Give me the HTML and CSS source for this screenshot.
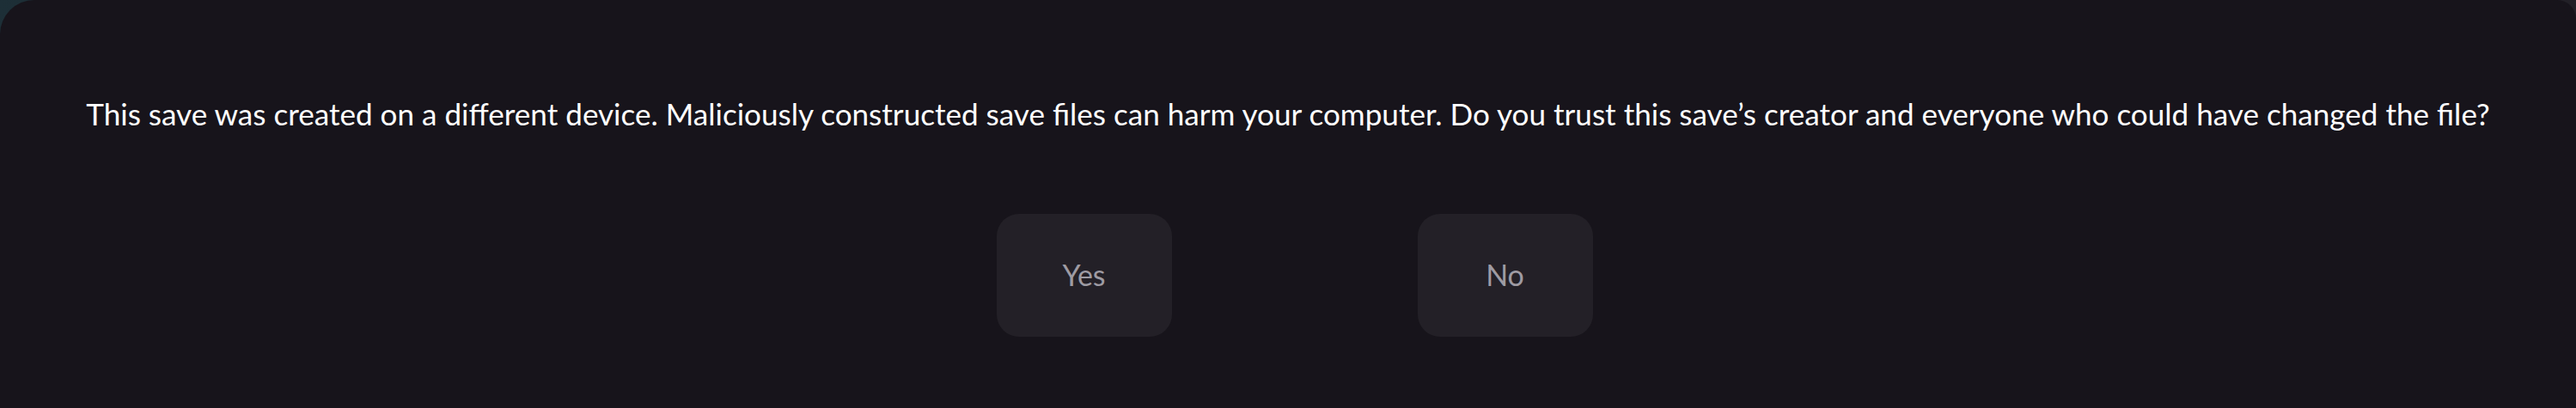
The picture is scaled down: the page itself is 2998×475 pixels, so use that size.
FILE: index.html
```html
<!DOCTYPE html>
<html lang="en">
<head>
    <meta charset="UTF-8">
    <meta name="viewport" content="width=device-width, initial-scale=1.0">
    <title>Trust save</title>
    <link rel="stylesheet" href="styles.css">
</head>
<body>
    <div class="dialog">
        <p class="message">This save was created on a different device. Maliciously constructed save files can harm your computer. Do you trust this save’s creator and everyone who could have changed the file?</p>
        <div class="actions">
            <button class="yes">Yes</button>
            <button class="no">No</button>
        </div>
    </div>
</body>
</html>
```

FILE: styles.css
```css
html, body {
    height: 100%;
}
body {
    margin: 0;
    background: linear-gradient(to right, #1d2f37, #1a1a20 20%, #1a181e 80%, #222027);
    font-family: Lato, "Open Sans", sans-serif;
}
.dialog {
    height: 100%;
    box-sizing: border-box;
    background-color: #17141b;
    border-radius: 40px 22px 0 0;
    padding-top: 112px;
    text-align: center;
}
.message {
    margin: 0;
    color: #ffffff;
    font-size: 35.1px;
    line-height: 40px;
    white-space: nowrap;
}
.actions {
    display: flex;
    justify-content: center;
    gap: 286px;
    margin-top: 97px;
    padding-left: 15px;
}
button {
    width: 204px;
    height: 143px;
    padding-bottom: 4px;
    border: none;
    border-radius: 26px;
    background-color: #232027;
    color: #9e9ba3;
    font-family: inherit;
    font-size: 34px;
    cursor: pointer;
}
```
